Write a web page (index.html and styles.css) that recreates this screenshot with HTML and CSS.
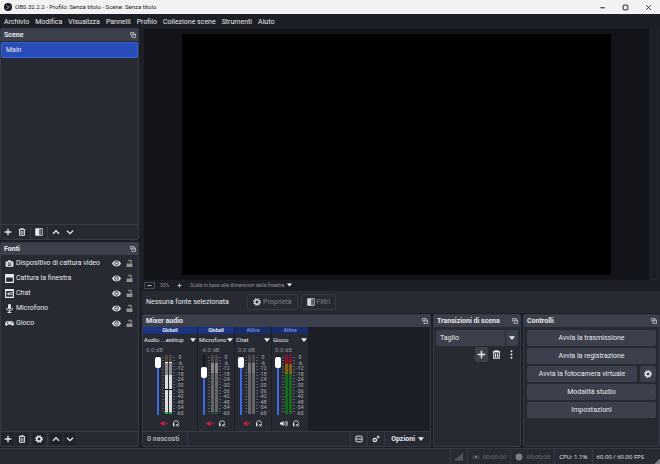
FILE: index.html
```
<!DOCTYPE html>
<html lang="it">
<head>
<meta charset="utf-8">
<title>OBS 32.2.2 - Profilo: Senza titolo - Scene: Senza titolo</title>
<link rel="stylesheet" href="styles.css">
</head>
<body>
<svg class="defs" aria-hidden="true">
  <symbol id="popout" viewBox="0 0 12 12"><path d="M1 1h7v3M1 1v5h2M4 4h7v7H4zM4 6h7" fill="none" stroke="currentColor" stroke-width="1.5"/></symbol>
  <symbol id="plus" viewBox="0 0 12 12"><path d="M6 1v10M1 6h10" stroke="currentColor" stroke-width="2"/></symbol>
  <symbol id="trash" viewBox="0 0 12 12"><path d="M1 2.5h10M4 2V1h4v1M2.3 3v8h7.4V3M4.7 4.5v5M7.3 4.5v5" fill="none" stroke="currentColor" stroke-width="1.4"/></symbol>
  <symbol id="filter" viewBox="0 0 12 12"><path d="M1 1h10v10H1z" fill="none" stroke="currentColor" stroke-width="1.2"/><path d="M1 1h5v10H1z" fill="currentColor"/><path d="M6 1h3v10H6z" fill="currentColor" opacity=".4"/></symbol>
  <symbol id="up" viewBox="0 0 12 12"><path d="M1.5 8.500L6 4l4.500 4.500" fill="none" stroke="currentColor" stroke-width="2"/></symbol>
  <symbol id="down" viewBox="0 0 12 12"><path d="M1.500 4L6 8.500 10.500 4" fill="none" stroke="currentColor" stroke-width="2"/></symbol>
  <symbol id="gear" viewBox="0 0 12 12"><circle cx="6" cy="6" r="3.400" fill="none" stroke="currentColor" stroke-width="2.400"/><circle cx="6" cy="6" r="4.900" fill="none" stroke="currentColor" stroke-width="1.800" stroke-dasharray="2.100 1.750"/></symbol>
  <symbol id="gears" viewBox="0 0 12 12"><circle cx="4.300" cy="7.500" r="2.500" fill="none" stroke="currentColor" stroke-width="2"/><circle cx="9.300" cy="3" r="1.500" fill="none" stroke="currentColor" stroke-width="1.500"/></symbol>
  <symbol id="caret" viewBox="0 0 8 5"><path d="M0 0h8L4 5z" fill="currentColor"/></symbol>
  <symbol id="eye" viewBox="0 0 16 12"><path d="M0 6c3.500-7 12.500-7 16 0-3.500 7-12.500 7-16 0z" fill="currentColor"/><circle cx="8" cy="6" r="3.800" fill="#272a33"/><circle cx="8" cy="6" r="2.200" fill="currentColor"/></symbol>
  <symbol id="lock" viewBox="0 0 12 14"><path d="M1 7h10v6H1z" fill="currentColor"/><path d="M9 7V3.500c0-3-4.500-3-4.500 0" fill="none" stroke="currentColor" stroke-width="1.800"/></symbol>
  <symbol id="camera" viewBox="0 0 14 14"><path d="M1 4h3l1.500-2h3L10 4h3v8H1z" fill="currentColor"/><circle cx="7" cy="7.800" r="2.900" fill="#272a33"/><circle cx="7" cy="7.800" r="1.500" fill="currentColor"/></symbol>
  <symbol id="window" viewBox="0 0 14 14"><path d="M1 1h12v12H1z" fill="none" stroke="currentColor" stroke-width="1.800"/><path d="M1 1h12v4.500H1z" fill="currentColor"/></symbol>
  <symbol id="chat" viewBox="0 0 14 14"><path d="M1 1h12v12H1z" fill="none" stroke="currentColor" stroke-width="1.800"/><path d="M1 1h12v2H1zM3 7.500l4-3v6zM8 5h4v1.500H8zM8 8h4v1.500H8z" fill="currentColor"/></symbol>
  <symbol id="mic" viewBox="0 0 14 14"><rect x="4.700" y="0" width="4.600" height="8.500" rx="2.300" fill="currentColor"/><path d="M2.500 6c0 6 9 6 9 0M7 10.500V13M4 13.300h6" fill="none" stroke="currentColor" stroke-width="1.500"/></symbol>
  <symbol id="pad" viewBox="0 0 14 14"><path d="M3.500 3.500h7c4 0 4 7 1.500 7-1.500 0-2-2-3.200-2H5.200C4 8.500 3.500 10.500 2 10.500c-2.500 0-2.500-7 1.500-7z" fill="currentColor"/><path d="M4 4.700v2.600M2.700 6h2.600M9 6h3" stroke="#272a33" stroke-width="1"/></symbol>
  <symbol id="muted" viewBox="0 0 16 12"><path d="M1 4h3l4.500-3.500v11L4 8H1z" fill="currentColor"/><path d="M10.500 4l4 4M14.500 4l-4 4" stroke="currentColor" stroke-width="1.800"/></symbol>
  <symbol id="speaker" viewBox="0 0 16 12"><path d="M0 4h3l4-3.500v11L3 8H0z" fill="currentColor"/><path d="M9 3.500q2 2.500 0 5M11 1.500q4 4.500 0 9M13.300.5q4 5.500 0 11" fill="none" stroke="currentColor" stroke-width="1.400"/></symbol>
  <symbol id="phones" viewBox="0 0 14 14"><path d="M2 12V6c0-6 10-6 10 0v1" fill="none" stroke="currentColor" stroke-width="1.600"/><path d="M1 7h3v5.500H1z" fill="currentColor"/><path d="M7.500 8l5 5M12.500 8l-5 5" stroke="currentColor" stroke-width="2"/></symbol>
  <symbol id="layout" viewBox="0 0 14 12"><rect x="1.500" y="1" width="11" height="10" rx="2" fill="none" stroke="currentColor" stroke-width="1.700"/><path d="M2 6h10" stroke="currentColor" stroke-width="1.700"/></symbol>
  <symbol id="dots" viewBox="0 0 4 14"><circle cx="2" cy="2" r="1.500" fill="currentColor"/><circle cx="2" cy="7" r="1.500" fill="currentColor"/><circle cx="2" cy="12" r="1.500" fill="currentColor"/></symbol>
</svg>

<div class="app">
  <header class="titlebar">
    <svg class="logo" viewBox="0 0 16 16"><circle cx="8" cy="8" r="8" fill="#17171b"/><path d="M5 3.500c0 3 2 4.200 4 3.800M12.700 6.500c-2.700 0-4 1.800-3.200 4.200M4 11.500c2.500 1 4.500-.5 4.200-3" fill="none" stroke="#a5a5aa" stroke-width="1.500"/></svg>
    <span class="title">OBS 32.2.2 - Profilo: Senza titolo - Scene: Senza titolo</span>
    <button class="win" aria-label="Riduci"><svg viewBox="0 0 12 12"><path d="M2 6.500h8" stroke="currentColor" stroke-width="1.700"/></svg></button>
    <button class="win" aria-label="Ingrandisci"><svg viewBox="0 0 12 12"><rect x="2" y="2" width="8" height="8" rx="1" fill="none" stroke="currentColor" stroke-width="1.700"/></svg></button>
    <button class="win" aria-label="Chiudi"><svg viewBox="0 0 12 12"><path d="M2 2l8 8M10 2l-8 8" stroke="currentColor" stroke-width="1.500"/></svg></button>
  </header>
  <nav class="menu">
    <button>Archivio</button><button>Modifica</button><button>Visualizza</button><button>Pannelli</button><button>Profilo</button><button>Collezione scene</button><button>Strumenti</button><button>Aiuto</button>
  </nav>

  <main class="work">
    <aside class="left">
      <section class="dock scenes">
        <h2>Scene<button class="pop" aria-label="Sgancia"><svg><use href="#popout"/></svg></button></h2>
        <ul class="scene-list"><li class="selected">Main</li></ul>
        <div class="tools">
          <button aria-label="Aggiungi"><svg><use href="#plus"/></svg></button>
          <button aria-label="Rimuovi"><svg><use href="#trash"/></svg></button>
          <i></i><button aria-label="Filtri scena"><svg><use href="#filter"/></svg></button>
          <i></i><button aria-label="Su"><svg><use href="#up"/></svg></button>
          <button aria-label="Giù"><svg><use href="#down"/></svg></button>
        </div>
      </section>
      <section class="dock sources">
        <h2>Fonti<button class="pop" aria-label="Sgancia"><svg><use href="#popout"/></svg></button></h2>
        <ul class="source-list">
          <li><svg class="kind"><use href="#camera"/></svg><span>Dispositivo di cattura video</span><button aria-label="Visibile"><svg class="eye"><use href="#eye"/></svg></button><button aria-label="Blocca"><svg class="lock"><use href="#lock"/></svg></button></li>
          <li><svg class="kind"><use href="#window"/></svg><span>Cattura la finestra</span><button aria-label="Visibile"><svg class="eye"><use href="#eye"/></svg></button><button aria-label="Blocca"><svg class="lock"><use href="#lock"/></svg></button></li>
          <li><svg class="kind"><use href="#chat"/></svg><span>Chat</span><button aria-label="Visibile"><svg class="eye"><use href="#eye"/></svg></button><button aria-label="Blocca"><svg class="lock"><use href="#lock"/></svg></button></li>
          <li><svg class="kind"><use href="#mic"/></svg><span>Microfono</span><button aria-label="Visibile"><svg class="eye"><use href="#eye"/></svg></button><button aria-label="Blocca"><svg class="lock"><use href="#lock"/></svg></button></li>
          <li><svg class="kind"><use href="#pad"/></svg><span>Gioco</span><button aria-label="Visibile"><svg class="eye"><use href="#eye"/></svg></button><button aria-label="Blocca"><svg class="lock"><use href="#lock"/></svg></button></li>
        </ul>
        <div class="tools">
          <button class="boxed" aria-label="Aggiungi"><svg><use href="#plus"/></svg></button>
          <button class="boxed" aria-label="Rimuovi"><svg><use href="#trash"/></svg></button>
          <i></i><button class="boxed" aria-label="Proprietà"><svg><use href="#gear"/></svg></button>
          <i></i><button class="boxed" aria-label="Su"><svg><use href="#up"/></svg></button>
          <button class="boxed" aria-label="Giù"><svg><use href="#down"/></svg></button>
        </div>
      </section>
    </aside>

    <div class="right">
      <section class="preview">
        <div class="stage"><div class="canvas"></div></div>
        <div class="vscroll"></div>
      </section>
      <div class="zoombar">
        <button class="minus" aria-label="Riduci zoom"><svg viewBox="0 0 12 12"><path d="M1 6h10" stroke="currentColor" stroke-width="2"/></svg></button>
        <span class="pct">33%</span>
        <button aria-label="Aumenta zoom"><svg><use href="#plus"/></svg></button>
        <button class="scale">Scala in base alle dimensioni della finestra<svg class="caret"><use href="#caret"/></svg></button>
      </div>
      <div class="context">
        <span>Nessuna fonte selezionata</span>
        <button disabled><svg><use href="#gear"/></svg>Proprietà</button>
        <button disabled><svg><use href="#filter"/></svg>Filtri</button>
      </div>
      <div class="docks">
        <section class="dock mixer">
          <h2>Mixer audio<button class="pop" aria-label="Sgancia"><svg><use href="#popout"/></svg></button></h2>
          <div class="strips" id="strips"></div>
          <div class="mixfoot">
            <button class="hidden-count">0 nascosti</button>
            <span class="grow"></span>
            <button aria-label="Disposizione"><svg><use href="#layout"/></svg></button>
            <button aria-label="Proprietà audio avanzate"><svg><use href="#gears"/></svg></button>
            <button class="options">Opzioni<svg class="caret"><use href="#caret"/></svg></button>
          </div>
        </section>
        <section class="dock transitions">
          <h2>Transizioni di scena<button class="pop" aria-label="Sgancia"><svg><use href="#popout"/></svg></button></h2>
          <div class="trans-body">
            <div class="combo"><select aria-label="Transizione"><option>Taglio</option></select><svg class="caret"><use href="#caret"/></svg></div>
            <div class="trans-tools">
              <button class="filled" aria-label="Aggiungi"><svg><use href="#plus"/></svg></button>
              <button aria-label="Rimuovi"><svg><use href="#trash"/></svg></button>
              <button aria-label="Altro"><svg><use href="#dots"/></svg></button>
            </div>
          </div>
        </section>
        <section class="dock controls">
          <h2>Controlli<button class="pop" aria-label="Sgancia"><svg><use href="#popout"/></svg></button></h2>
          <div class="buttons">
            <button>Avvia la trasmissione</button>
            <button>Avvia la registrazione</button>
            <div class="pair"><button>Avvia la fotocamera virtuale</button><button class="cog" aria-label="Configura"><svg><use href="#gear"/></svg></button></div>
            <button>Modalità studio</button>
            <button>Impostazioni</button>
          </div>
        </section>
      </div>
    </div>
  </main>

  <footer class="status">
    <span><svg class="bars" viewBox="0 0 16 14"><path d="M1 10h2v4H1zM5 7h2v7H5zM9 4h2v10H9zM13 0h2v14h-2z" fill="currentColor"/></svg></span>
    <span class="dim"><svg viewBox="0 0 14 14"><circle cx="7" cy="7" r="2.500" fill="currentColor"/><path d="M3 3q-3 4 0 8M11 3q3 4 0 8" fill="none" stroke="currentColor" stroke-width="1.300" opacity=".6"/></svg>00:00:00</span>
    <span class="dim"><svg viewBox="0 0 14 14"><circle cx="7" cy="7" r="6" fill="currentColor"/></svg>00:00:00</span>
    <span>CPU: 1.1%</span>
    <span class="fps">60.00 / 60.00 FPS</span>
    <svg class="grip" viewBox="0 0 12 12"><path d="M9 0h3v12H0V9h3V6h3V3h3z" fill="currentColor"/></svg>
  </footer>
</div>
<script src="mixer.js"></script>
</body>
</html>
```
FILE: mixer.js
```
const channels = [
  { name: "Audio ...esktop", group: "Globali", db: "0.0 dB", value: 95, meter: "loud", muted: true, wide: true },
  { name: "Microfono", group: "Globali", db: "-6.0 dB", value: 75, meter: "mic", muted: true },
  { name: "Chat", group: "Attive", db: "0.0 dB", value: 95, meter: "idle", muted: true },
  { name: "Gioco", group: "Attive", db: "0.0 dB", value: 95, meter: "live", muted: false }
];
const marks = [0, -6, -12, -18, -24, -30, -36, -42, -48, -54, -60];

document.getElementById("strips").innerHTML = channels.map(c => `
  <article class="strip${c.wide ? " wide" : ""}">
    <div class="group ${c.group.toLowerCase()}">${c.group}</div>
    <button class="name"><span>${c.name}</span><svg class="caret"><use href="#caret"/></svg></button>
    <div class="db">${c.db}</div>
    <div class="levels">
      <input type="range" aria-label="Volume ${c.name}" value="${c.value}" style="--v:${c.value}%">
      <div class="ticks"></div>
      <div class="meter ${c.meter}"><b></b><b></b></div>
      <div class="ticks"></div>
      <ol>${marks.map(m => `<li>${m}</li>`).join("")}</ol>
    </div>
    <div class="actions">
      <button class="${c.muted ? "muted" : ""}" aria-label="Muto"><svg><use href="#${c.muted ? "muted" : "speaker"}"/></svg></button>
      <button aria-label="Monitoraggio"><svg class="phones"><use href="#phones"/></svg></button>
    </div>
  </article>`).join("");
```
FILE: styles.css
```
:root {
  --window: #1d1f27;
  --panel: #272a33;
  --raised: #3c404d;
  --line: #363a46;
  --text: #e8e9ed;
}
* { box-sizing: border-box; }
body, h2, ul, ol { margin: 0; padding: 0; }
ul, ol { list-style: none; }
body {
  background: var(--window);
  color: var(--text);
  font: 7px/10px Roboto, "Open Sans", sans-serif;
}
button, select {
  font: inherit;
  color: inherit;
  background: none;
  border: 0;
  padding: 0;
}
svg { width: 8px; height: 8px; flex: none; display: block; }
.defs { display: none; }
svg.caret { width: 6px; height: 4px; }

.app { display: flex; flex-direction: column; min-height: 100vh; }
.titlebar {
  display: flex;
  align-items: center;
  height: 14px;
  padding: 0 8px 0 4px;
  background: #f3f1f2;
  color: #222;
  font-size: 6px;
}
.logo { margin-right: 3px; }
.title { flex: 1; }
.win { margin-left: 16px; }
.win svg { width: 7px; height: 7px; }

.menu {
  display: flex;
  gap: 6px;
  height: 15px;
  margin-bottom: -1px;
  padding: 0 4px;
}

.work {
  flex: 1;
  display: grid;
  grid-template-columns: 139px minmax(0, 1fr);
  gap: 3px;
}
.left { display: flex; flex-direction: column; gap: 2px; }
.dock {
  display: flex;
  flex-direction: column;
  background: var(--panel);
  border: 1px solid var(--line);
  border-radius: 2px;
}
.dock h2 {
  display: flex;
  align-items: center;
  justify-content: space-between;
  height: 12px;
  padding: 0 2px 0 3px;
  background: var(--raised);
  font-size: 7px;
  line-height: 12px;
}
.pop svg { width: 6px; height: 6px; color: #c4c6ce; }
.scenes { flex: 212; }
.sources { flex: 205; }
.scene-list { flex: 1; }
.source-list { flex: 1; padding-top: 1px; }
.scene-list .selected {
  margin: 1px 0;
  padding: 2px 4px;
  background: #284cb8;
  border: 1px solid #3a62d8;
  border-radius: 2px;
}
.source-list li {
  display: flex;
  align-items: center;
  height: 15px;
  padding: 0 5px 0 4px;
}
.source-list span { flex: 1; }
.kind { width: 9px; height: 9px; margin-right: 2px; }
.eye { width: 9px; height: 7px; margin-right: 5px; }
.lock { width: 7px; height: 9px; color: #96948f; }
.tools {
  display: flex;
  align-items: center;
  gap: 2px;
  height: 15px;
  padding: 0 1px;
  border-top: 1px solid var(--line);
}
.tools button { padding: 2px; border-radius: 2px; }
.tools .boxed { background: #20232b; }
.tools i { width: 1px; height: 14px; background: var(--line); }

.right { display: flex; flex-direction: column; min-width: 0; }
.preview { flex: 1; display: flex; gap: 2px; padding: 1px 2px 0; }
.stage {
  flex: 1;
  display: flex;
  justify-content: center;
  padding: 5px 0;
  background: #131419;
}
.canvas { background: #000; aspect-ratio: 16 / 9; }
.vscroll { width: 7px; border: 1px solid #22252d; }
.zoombar {
  display: flex;
  align-items: center;
  gap: 8px;
  height: 10px;
  padding: 0 2px;
  color: #8d9099;
  font-size: 5px;
}
.zoombar svg { width: 5px; height: 5px; }
.zoombar button { color: #d5d6da; }
.zoombar .minus { border: 1px solid #454954; padding: 0 2px; margin-right: -3px; }
.zoombar .scale { display: flex; align-items: center; gap: 3px; color: #8d9099; }
.zoombar .caret { height: 4px; color: #fff; }
.context {
  display: flex;
  align-items: center;
  gap: 3px;
  height: 22px;
  margin: 1px 0;
  padding: 0 4px;
  background: var(--panel);
}
.context span { width: 98px; }
.context button {
  display: flex;
  align-items: center;
  gap: 2px;
  height: 16px;
  padding: 0 5px;
  border: 1px solid var(--line);
  border-radius: 2px;
  color: #7e818b;
}
.context svg { color: #d4d5d9; }

.docks { display: flex; gap: 2px; height: 133px; }
.mixer { flex: 1; }
.transitions { width: 88px; }
.controls { width: 137px; }

.strips {
  flex: 1;
  display: flex;
  gap: 1px;
  background: var(--window);
}
.strip {
  display: flex;
  flex-direction: column;
  width: 36px;
  background: var(--panel);
}
.strip.wide { width: 54px; }
.group {
  height: 7px;
  background: #1a3480;
  font-size: 5px;
  line-height: 7px;
  font-weight: 700;
  text-align: center;
}
.attive { color: #6d86d0; background: #182c68; }
.name {
  display: flex;
  align-items: center;
  justify-content: space-between;
  padding: 0 1px;
  height: 11px;
  font-size: 6px;
}
.db { padding: 0 3px; height: 10px; font-size: 6px; color: #8d9099; }
.levels {
  display: flex;
  justify-content: center;
  height: 60px;
}
.levels input {
  appearance: none;
  writing-mode: vertical-lr;
  direction: rtl;
  width: 6px;
  height: 60px;
  margin: 0;
  background: linear-gradient(to top, #3c6ae0 var(--v), #16181e var(--v)) center / 2px 100% no-repeat;
}
.levels input::-webkit-slider-thumb {
  appearance: none;
  width: 6px;
  height: 11px;
  border-radius: 2px;
  background: #fff;
}
.ticks {
  width: 2px;
  margin: 2px 0 3px 1px;
  background: repeating-linear-gradient(#5a5d66 0 1px, transparent 1px 3px);
}
.meter {
  display: flex;
  gap: 1px;
  width: 7px;
  margin-left: 1px;
  height: 59px;
}
.meter b { flex: 1; background: #666; }
.loud b { background: linear-gradient(#4a4744 0 7px, #eee 7px 8px, #8a8a8a 8px 20px, #ddd 20px 34px, #000 34px 35px, #ddd 35px 57px, #2fae3c 57px); }
.mic b { background: linear-gradient(#484848 0 8px, #888 8px 18px, #666 18px 57px, #1d5523 57px); }
.idle b { background: linear-gradient(#484848 0 8px, #777 8px 18px, #666 18px); }
.live b { background: linear-gradient(#84142a 0 9px, #80600f 9px 19px, #17691e 19px); }
.levels ol {
  display: flex;
  flex-direction: column;
  justify-content: space-between;
  width: 10px;
  height: 61px;
  color: #b2b4bb;
  font-size: 5px;
  line-height: 5px;
  text-align: center;
}
.actions {
  display: flex;
  align-items: center;
  justify-content: center;
  gap: 4px;
  flex: 1;
}
.actions svg { width: 8px; height: 7px; }
.actions .muted { color: #d81f43; }
.mixfoot {
  display: flex;
  height: 15px;
  border-top: 1px solid var(--line);
}
.mixfoot button { padding: 0 4px; border-left: 1px solid var(--line); }
.mixfoot .hidden-count { border-left: 0; border-right: 1px solid var(--line); padding-right: 8px; color: #a9abb3; font-weight: 700; }
.grow { flex: 1; }
.mixfoot .options { display: flex; align-items: center; gap: 3px; padding: 0 6px; font-weight: 700; }

.trans-body { padding: 3px 2px; }
.combo {
  display: flex;
  align-items: center;
  height: 16px;
  padding-right: 3px;
  background: var(--raised);
  border-radius: 2px;
}
.combo select { appearance: none; flex: 1; height: 16px; padding: 0 4px; border-right: 1px solid var(--panel); margin-right: 3px; }
.trans-tools { display: flex; justify-content: flex-end; gap: 2px; margin-top: 1px; }
.trans-tools button { padding: 3px 2px; border-radius: 2px; }
.trans-tools svg { width: 9px; height: 9px; }
.trans-tools .filled { background: var(--raised); }

.buttons { display: flex; flex-direction: column; gap: 2px; padding: 3px; }
.buttons button { height: 16px; border-radius: 2px; background: var(--raised); }
.pair { display: flex; gap: 3px; }
.pair button { flex: 1; }
.pair .cog { flex: none; padding: 0 4px; }

.status {
  display: flex;
  justify-content: flex-end;
  height: 16px;
  margin-top: 1px;
  background: var(--panel);
  border-top: 1px solid var(--line);
  font-family: "Open Sans", sans-serif;
  font-size: 6px;
}
.status span {
  display: flex;
  align-items: center;
  gap: 3px;
  padding: 0 4px;
  border-left: 1px solid var(--line);
}
.status .dim, .bars { color: #7b7e87; }
.status .fps { padding-right: 11px; }
.grip { width: 5px; height: 5px; align-self: flex-end; color: #7b7e87; }
```
